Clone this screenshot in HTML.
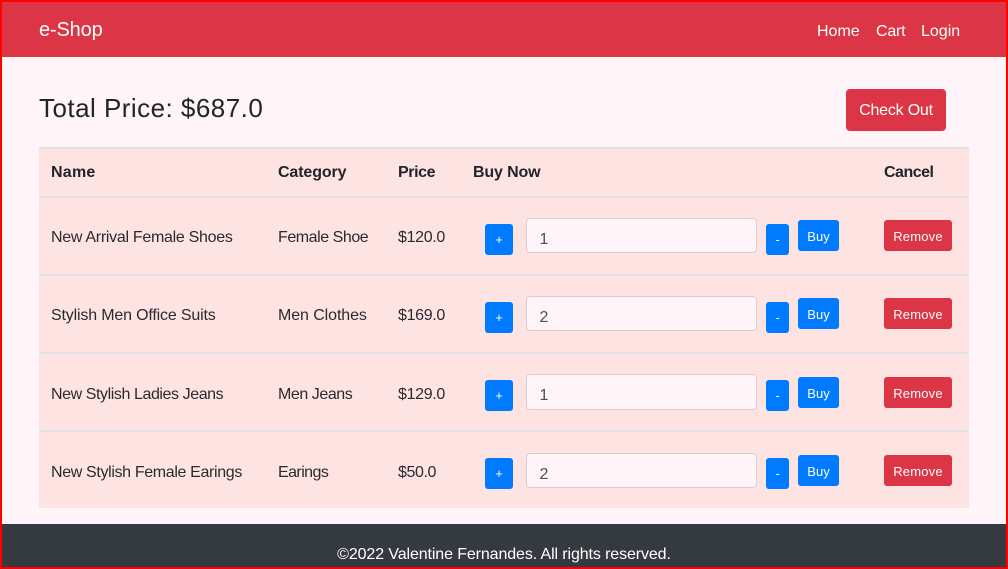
<!DOCTYPE html>
<html><head><meta charset="utf-8"><style>
*{box-sizing:border-box}
html,body{margin:0;padding:0}
body{width:1008px;height:569px;position:relative;overflow:hidden;background:#fff4f8;font-family:"Liberation Sans",sans-serif;color:#212529;font-size:16px}
.a{position:absolute;white-space:nowrap;line-height:20px}
.b{position:absolute;border-radius:3px;color:#fff;text-align:center;white-space:nowrap;font-size:13px;line-height:33px}
.bl{background:#007bff}.rd{background:#dc3545;letter-spacing:.2px}
.i{position:absolute;left:526px;width:231px;height:35px;background:#fff4f8;border:1px solid #d9cdd3;border-radius:4px;color:#495057;padding-left:12.5px;line-height:41px}
.l{position:absolute;left:39px;width:930px;height:2px;background:#dfe2e6}
.t{color:#2b2a2e;margin-top:2px}
.h{font-weight:bold;margin-top:1px}
.p{line-height:32px}
</style></head><body>
<div style="position:absolute;left:0;top:0;width:1008px;height:57px;background:#dc3545"></div>
<div class="a" style="left:39px;top:20px;font-size:20px;color:#fff;letter-spacing:-.15px">e-Shop</div>
<div class="a" style="left:817px;top:21px;color:#fff;margin-top:1px">Home</div>
<div class="a" style="left:876px;top:21px;color:#fff;margin-top:1px;letter-spacing:-.2px">Cart</div>
<div class="a" style="left:921px;top:21px;color:#fff;margin-top:1px">Login</div>
<div class="a" style="left:39px;top:93px;font-size:26px;line-height:30px;letter-spacing:.47px">Total Price: $687.0</div>
<div class="b rd" style="left:846px;top:89px;width:100px;height:42px;font-size:16px;line-height:43px;border-radius:4px;letter-spacing:-.2px">Check Out</div>
<div style="position:absolute;left:39px;top:148px;width:930px;height:360px;background:#fee3e3"></div>
<div class="l" style="top:147px;height:2px"></div>
<div class="l" style="top:196px"></div><div class="l" style="top:274px"></div><div class="l" style="top:352px"></div><div class="l" style="top:430px"></div>
<div class="a h" style="left:51px;top:162px;letter-spacing:.25px">Name</div>
<div class="a h" style="left:278px;top:162px;letter-spacing:-.12px">Category</div>
<div class="a h" style="left:398px;top:162px;letter-spacing:-.4px">Price</div>
<div class="a h" style="left:473px;top:162px;letter-spacing:-.14px">Buy Now</div>
<div class="a h" style="left:884px;top:162px;letter-spacing:-.5px">Cancel</div>

<div class="a t" style="left:51px;top:226px;letter-spacing:-.29px">New Arrival Female Shoes</div>
<div class="a t" style="left:278px;top:226px;letter-spacing:-.45px">Female Shoe</div>
<div class="a t" style="left:398px;top:226px;letter-spacing:-.33px">$120.0</div>
<div class="b bl p" style="left:485px;top:224px;width:28px;height:31px">+</div>
<div class="i" style="top:218px">1</div>
<div class="b bl p" style="left:766px;top:224px;width:23px;height:31px">-</div>
<div class="b bl" style="left:798px;top:220px;width:41px;height:31px">Buy</div>
<div class="b rd" style="left:884px;top:220px;width:68px;height:31px">Remove</div>

<div class="a t" style="left:51px;top:304px;letter-spacing:-.17px">Stylish Men Office Suits</div>
<div class="a t" style="left:278px;top:304px;letter-spacing:-.09px">Men Clothes</div>
<div class="a t" style="left:398px;top:304px;letter-spacing:-.33px">$169.0</div>
<div class="b bl p" style="left:485px;top:302px;width:28px;height:31px">+</div>
<div class="i" style="top:296px">2</div>
<div class="b bl p" style="left:766px;top:302px;width:23px;height:31px">-</div>
<div class="b bl" style="left:798px;top:298px;width:41px;height:31px">Buy</div>
<div class="b rd" style="left:884px;top:298px;width:68px;height:31px">Remove</div>

<div class="a t" style="left:51px;top:383px;letter-spacing:-.42px">New Stylish Ladies Jeans</div>
<div class="a t" style="left:278px;top:383px;letter-spacing:-.44px">Men Jeans</div>
<div class="a t" style="left:398px;top:383px;letter-spacing:-.33px">$129.0</div>
<div class="b bl p" style="left:485px;top:380px;width:28px;height:31px">+</div>
<div class="i" style="top:374px;height:36px">1</div>
<div class="b bl p" style="left:766px;top:380px;width:23px;height:31px">-</div>
<div class="b bl" style="left:798px;top:377px;width:41px;height:31px">Buy</div>
<div class="b rd" style="left:884px;top:377px;width:68px;height:31px">Remove</div>

<div class="a t" style="left:51px;top:461px;letter-spacing:-.35px">New Stylish Female Earings</div>
<div class="a t" style="left:278px;top:461px;letter-spacing:-.57px">Earings</div>
<div class="a t" style="left:398px;top:461px;letter-spacing:-.4px">$50.0</div>
<div class="b bl p" style="left:485px;top:458px;width:28px;height:31px">+</div>
<div class="i" style="top:453px">2</div>
<div class="b bl p" style="left:766px;top:458px;width:23px;height:31px">-</div>
<div class="b bl" style="left:798px;top:455px;width:41px;height:31px">Buy</div>
<div class="b rd" style="left:884px;top:455px;width:68px;height:31px">Remove</div>

<div style="position:absolute;left:0;top:524px;width:1008px;height:45px;background:#343a40"></div>
<div class="a" style="left:0;width:1008px;text-align:center;top:545px;color:#fff;letter-spacing:-.11px">©2022 Valentine Fernandes. All rights reserved.</div>
<div style="position:absolute;left:0;top:0;width:1008px;height:569px;border:2px solid #f00"></div>
</body></html>
